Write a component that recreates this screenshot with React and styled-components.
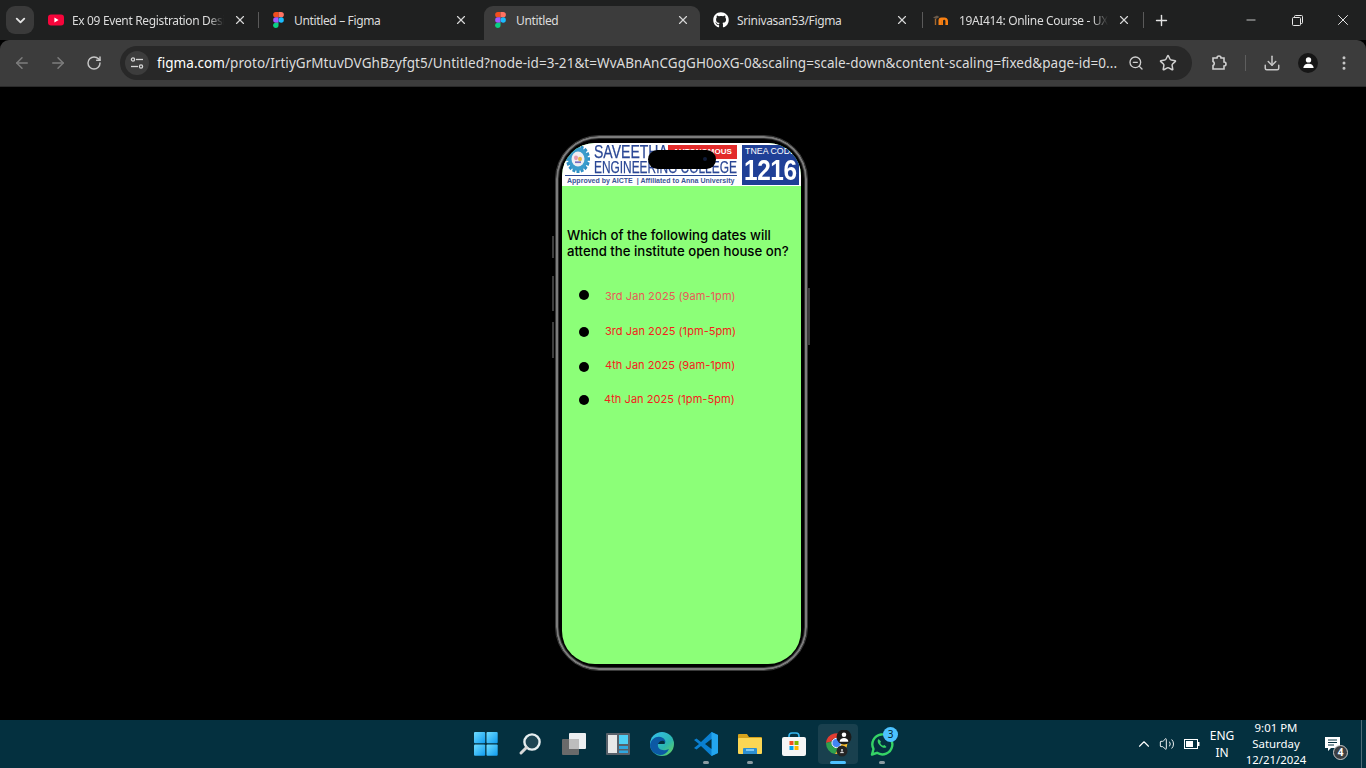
import React from 'react';
import styled, { createGlobalStyle } from 'styled-components';
import {
  ArrowLeft, ArrowRight, RotateCw, ZoomOut, Star, Download, MoreVertical,
  X, Plus, Minus, ChevronDown, ChevronUp, Volume2,
} from 'lucide-react';
import { FaGithub } from 'react-icons/fa';

const GlobalStyle = createGlobalStyle`
  html, body {
    margin: 0;
    padding: 0;
    background: #000;
    font-family: "Noto Sans", "Open Sans", sans-serif;
    overflow: hidden;
  }
  * { box-sizing: border-box; }
`;

const Page = styled.div`
  width: 1366px;
  height: 768px;
  display: flex;
  flex-direction: column;
`;

/* browser tab strip */
const TabStrip = styled.div`
  height: 40px;
  background: #1f2020;
  display: flex;
  padding: 6px 0 0 6px;
  color: #e3e3e3;
`;

const TabSearch = styled.div`
  width: 28px;
  height: 28px;
  border-radius: 9px;
  background: #3a3a3a;
  display: flex;
  align-items: center;
  justify-content: center;
  margin-right: 4px;
`;

const Tab = styled.div`
  width: ${p => p.$width}px;
  height: 34px;
  display: flex;
  align-items: center;
  padding: 0 ${p => p.$padRight}px 6px ${p => p.$padLeft}px;
  background: ${p => (p.$active ? '#3c3c3c' : 'transparent')};
  border-radius: ${p => (p.$active ? '9px 9px 0 0' : '0')};
  font-size: 12px;
  letter-spacing: -0.35px;
`;

const TabIcon = styled.div`
  width: 16px;
  height: 16px;
  flex: none;
  margin-right: ${p => p.$gap}px;
  display: flex;
  align-items: center;
  justify-content: center;
`;

const TabTitle = styled.div`
  flex: 1;
  min-width: 0;
  margin-right: 9px;
  white-space: nowrap;
  overflow: hidden;
  color: #dcdcdc;
  mask-image: ${p => (p.$fade ? 'linear-gradient(90deg, #000 90%, transparent 100%)' : 'none')};
`;

const TabClose = styled(X)`
  flex: none;
  color: #d6d6d6;
`;

const TabDivider = styled.div`
  width: 1px;
  height: 16px;
  margin-top: 6px;
  background: #5a5a5a;
  flex: none;
`;

const NewTab = styled.div`
  width: 34px;
  height: 28px;
  display: flex;
  align-items: center;
  justify-content: center;
`;

const WindowControls = styled.div`
  margin-left: auto;
  margin-top: -6px;
  display: flex;
`;

const WindowButton = styled.div`
  width: 46px;
  height: 40px;
  display: flex;
  align-items: center;
  justify-content: center;
  color: #e8e8e8;
`;

/* browser toolbar */
const Toolbar = styled.div`
  height: 47px;
  background: #3c3c3c;
  border-radius: 9px 9px 0 0;
  border-bottom: 1px solid #2a2a2a;
  display: flex;
  align-items: center;
  padding: 0 0 1px 4px;
  color: #c7c7c7;
`;

const NavButton = styled.div`
  width: 36px;
  height: 32px;
  display: flex;
  align-items: center;
  justify-content: center;
  color: ${p => (p.$dim ? '#7d7d7d' : '#c7c7c7')};
`;

const Omnibox = styled.div`
  width: 1072px;
  height: 34px;
  margin-left: 8px;
  background: #282828;
  border-radius: 17px;
  display: flex;
  align-items: center;
  padding: 0 14px 0 5px;
`;

const SiteChip = styled.div`
  width: 24px;
  height: 24px;
  border-radius: 50%;
  background: #3c3c3c;
  display: flex;
  align-items: center;
  justify-content: center;
  margin-right: 8px;
  flex: none;
`;

const UrlText = styled.div`
  width: 958px;
  font-size: 13.5px;
  color: #dcdcdc;
  white-space: nowrap;
  letter-spacing: 0.05px;
  span { color: #fff; }
`;

const OmniActions = styled.div`
  display: flex;
  align-items: center;
  margin-left: 13px;
  gap: 15px;
  color: #d0d0d0;
`;

const ToolActions = styled.div`
  display: flex;
  align-items: center;
  margin-left: 8px;
`;

const ToolSlot = styled.div`
  width: 36px;
  display: flex;
  align-items: center;
  justify-content: center;
`;

const ToolDivider = styled.div`
  width: 1px;
  height: 16px;
  background: #5e5e5e;
  margin: 0 8px 0 9px;
`;

const Avatar = styled.div`
  width: 20px;
  height: 20px;
  border-radius: 50%;
  background: #161616;
  display: flex;
  align-items: center;
  justify-content: center;
`;

/* black figma prototype stage */
const Stage = styled.main`
  flex: 1;
  background: #000;
  display: flex;
  justify-content: center;
  align-items: flex-start;
  padding: 48px 3px 0 0;
`;

const Phone = styled.div`
  position: relative;
  width: 253px;
  height: 536px;
  border-radius: 44px;
  background: #000;
  border: 1px solid #3a3a3a;
  box-shadow: inset 0 0 0 2px #7c7c7c, inset 0 0 0 3px #2c2c2c;
  padding: 7px 6px 6px;
`;

const SideButton = styled.div`
  position: absolute;
  top: ${p => p.$top}px;
  ${p => p.$side}: ${p => (p.$side === 'left' ? -4 : -3)}px;
  width: 2px;
  height: ${p => p.$height}px;
  background: #3d3d3d;
`;

const Screen = styled.div`
  height: 100%;
  border-radius: 33px;
  background: #8cff78;
  overflow: hidden;
  display: flex;
  flex-direction: column;
`;

const Notch = styled.div`
  position: absolute;
  top: 14px;
  left: 92px;
  width: 68px;
  height: 19px;
  border-radius: 10px;
  background: #000;
`;

const Lens = styled.div`
  position: absolute;
  top: 7px;
  right: 9px;
  width: 4px;
  height: 4px;
  border-radius: 50%;
  background: #101c3a;
`;

const Banner = styled.div`
  height: 43px;
  flex: none;
  background: #fff;
  display: flex;
  padding: 2px 2px 1px 3px;
  filter: blur(0.4px);
`;

const BannerLeft = styled.div`
  width: 172px;
  display: flex;
  flex-direction: column;
`;

const BannerTop = styled.div`
  display: flex;
  height: 30px;
`;

const Seal = styled.div`
  width: 24px;
  height: 28px;
  flex: none;
  margin-left: 1px;
`;

const BannerNames = styled.div`
  flex: 1;
  min-width: 0;
  padding-left: 4px;
  color: #2a4795;
  font-family: "Liberation Sans", sans-serif;
  -webkit-text-stroke: 0.25px #2a4795;
`;

const NameLine = styled.div`
  position: relative;
  height: 15px;
  white-space: nowrap;
  line-height: 15px;
  font-size: ${p => p.$size}px;
`;

const NameText = styled.span`
  display: inline-block;
  transform: scaleX(${p => p.$squeeze});
  transform-origin: 0 50%;
`;

const AutonomousTag = styled.span`
  position: absolute;
  top: 0;
  right: 0;
  width: 69px;
  height: 14px;
  background: #e32b2b;
  color: #fff;
  font: bold 8px/14px "Liberation Sans", sans-serif;
  -webkit-text-stroke: 0;
  text-align: center;
`;

const Affiliation = styled.div`
  border-top: 1px solid #2a4795;
  font: bold 7px/9px "Liberation Sans", sans-serif;
  color: #3a5496;
  white-space: nowrap;
  padding-left: 2px;
  letter-spacing: 0.02px;
`;

const CodeBlock = styled.div`
  width: 57px;
  margin-left: 5px;
  background: #1f3f96;
  color: #fff;
  display: flex;
  flex-direction: column;
  align-items: center;
  font-family: "Liberation Sans", sans-serif;
`;

const CodeLabel = styled.div`
  font-size: 8.8px;
  line-height: 11px;
  padding-top: 1px;
  white-space: nowrap;
`;

const CodeNumber = styled.div`
  font-size: 29px;
  font-weight: bold;
  line-height: 27px;
  letter-spacing: -0.5px;
  transform: scaleX(0.84);
`;

const Question = styled.p`
  margin: 41px 0 0 5px;
  font: 500 13.2px/16px Inter, sans-serif;
  color: #000;
`;

const Options = styled.ul`
  list-style: none;
  margin: 0;
  padding: 0 0 0 17px;
`;

const Option = styled.li`
  display: flex;
  align-items: flex-start;
  height: 14px;
  margin-top: ${p => p.$top}px;
`;

const Dot = styled.span`
  width: 10px;
  height: 10px;
  border-radius: 50%;
  background: #000;
  flex: none;
  margin-top: ${p => p.$drop}px;
`;

const OptionLabel = styled.span`
  margin-left: ${p => p.$indent}px;
  font: 400 11px/14px Inter, sans-serif;
  letter-spacing: 0.06px;
  color: ${p => (p.$soft ? '#e85a58' : '#f5201c')};
  white-space: nowrap;
`;

/* windows taskbar */
const Taskbar = styled.footer`
  height: 48px;
  background: #04303f;
  display: grid;
  grid-template-columns: 464px 440px 1fr;
  color: #fff;
`;

const TaskIcons = styled.div`
  display: flex;
`;

const TaskItem = styled.div`
  position: relative;
  width: 44px;
  height: 48px;
  display: flex;
  align-items: center;
  justify-content: center;
  &::before {
    content: '';
    display: ${p => (p.$active ? 'block' : 'none')};
    position: absolute;
    inset: 4px 2px;
    border-radius: 4px;
    background: #19404e;
  }
  & > * { position: relative; }
`;

const RunningMark = styled.span`
  position: absolute !important;
  bottom: 4px;
  left: 50%;
  transform: translateX(-50%);
  height: 3px;
  border-radius: 2px;
  width: ${p => (p.$active ? 16 : 6)}px;
  background: ${p => (p.$active ? '#4cc2ff' : '#8a9ba2')};
`;

const Tray = styled.div`
  display: flex;
  align-items: center;
  padding-left: 230px;
  font-size: 12px;
`;

const TrayIcon = styled.div`
  width: ${p => p.$width}px;
  display: flex;
  justify-content: center;
  align-items: center;
`;

const TrayText = styled.div`
  width: ${p => p.$width}px;
  text-align: center;
  font-size: ${p => p.$size || 12}px;
  line-height: ${p => p.$line}px;
  white-space: nowrap;
  margin-top: ${p => p.$top || 0}px;
`;

const NotifyWrap = styled.div`
  position: relative;
  width: 30px;
  margin-left: 6px;
  display: flex;
  justify-content: center;
`;

const NotifyBadge = styled.span`
  position: absolute;
  right: 0;
  top: 9px;
  width: 15px;
  height: 15px;
  border-radius: 50%;
  background: #3b3f42;
  border: 1px solid #c9c9c9;
  font: bold 10px/13px "Noto Sans", sans-serif;
  text-align: center;
`;

const CountBadge = styled.span`
  position: absolute !important;
  top: 7px;
  right: 6px;
  width: 15px;
  height: 15px;
  border-radius: 50%;
  background: #4cc2ff;
  color: #06222c;
  font: 10px/15px "Noto Sans", sans-serif;
  text-align: center;
`;

const ShowDesktop = styled.div`
  width: 1px;
  height: 48px;
  margin-left: auto;
  margin-right: 4px;
  background: #4e6c77;
`;

function FigmaIcon() {
  return (
    <svg width="11" height="16" viewBox="0 0 12 18">
      <path d="M0 3a3 3 0 0 1 3-3h3v6H3a3 3 0 0 1-3-3z" fill="#f24e1e" />
      <path d="M6 0h3a3 3 0 0 1 0 6H6z" fill="#ff7262" />
      <path d="M0 9a3 3 0 0 1 3-3h3v6H3a3 3 0 0 1-3-3z" fill="#a259ff" />
      <circle cx="9" cy="9" r="3" fill="#1abcfe" />
      <path d="M0 15a3 3 0 0 1 3-3h3v3a3 3 0 0 1-6 0z" fill="#0acf83" />
    </svg>
  );
}

function YoutubeIcon() {
  return (
    <svg width="16" height="12" viewBox="0 0 16 12">
      <rect width="16" height="11" y="0.5" rx="3" fill="#f7053b" />
      <path d="M6.4 3.6 10.6 6l-4.2 2.4z" fill="#fff" />
    </svg>
  );
}

function MoodleIcon() {
  return (
    <svg width="16" height="12" viewBox="0 0 16 12">
      <path d="M0 3.500 4 1.500 6.500 3 3 5z" fill="#6b5a4a" />
      <path d="M1.800 5h1.400v6H1.800z" fill="#a8692c" />
      <path d="M5.500 11V6.500a3 3 0 0 1 3-3h2.500a3.500 3.500 0 0 1 4 3.500v4h-2.600V7a1.200 1.200 0 0 0-2.400 0v4H8.100V7a.8.800 0 0 0-.1-.5V11z" fill="#f98012" />
    </svg>
  );
}

function TuneIcon() {
  return (
    <svg width="14" height="14" viewBox="0 0 14 14" fill="none" stroke="#d6d6d6" strokeWidth="1.3">
      <circle cx="3" cy="3.5" r="1.6" />
      <path d="M6 3.5h7" />
      <circle cx="11" cy="10.5" r="1.6" />
      <path d="M1 10.5h7" />
    </svg>
  );
}

function PuzzleIcon() {
  return (
    <svg width="18" height="18" viewBox="0 0 18 18" fill="none" stroke="#d0d0d0" strokeWidth="1.6">
      <path d="M4 4h4a2 2 0 0 1 4 0h3v4a2 2 0 0 1 0 4v3H4v-3.5a2.2 2.2 0 0 0 0-4z" />
    </svg>
  );
}

function RestoreIcon() {
  return (
    <svg width="11" height="11" viewBox="0 0 11 11" fill="none" stroke="#e8e8e8">
      <rect x="0.5" y="2.5" width="8" height="8" rx="1" />
      <path d="M2.5 2.5V1.5a1 1 0 0 1 1-1h6a1 1 0 0 1 1 1v6a1 1 0 0 1-1 1H8.5" />
    </svg>
  );
}

function UserGlyph({ size = 14, fill = '#fff' }) {
  return (
    <svg width={size} height={size} viewBox="0 0 14 14" fill={fill}>
      <circle cx="7" cy="4.2" r="2.9" />
      <path d="M1.5 13c0-3 2.6-4.6 5.5-4.6s5.500 1.600 5.500 4.600z" />
    </svg>
  );
}

function CollegeSeal() {
  const teeth = Array.from({ length: 16 }, (_, i) => i * 22.5);
  return (
    <svg width="24" height="28" viewBox="0 0 24 24" preserveAspectRatio="none">
      {teeth.map(a => (
        <rect key={a} x="10.5" y="0" width="3" height="4" fill="#2f8fc4" transform={`rotate(${a} 12 12)`} />
      ))}
      <circle cx="12" cy="12" r="10" fill="#3a9ccc" />
      <circle cx="12" cy="12" r="6.5" fill="#f0eef2" />
      <circle cx="10" cy="11" r="2" fill="#e69ab0" />
      <circle cx="14" cy="12" r="2" fill="#e9b84a" />
      <rect x="9" y="14" width="6" height="1.5" fill="#7a6fc0" />
    </svg>
  );
}

function WindowsLogo() {
  const tiles = [[0, 0], [12.5, 0], [0, 12.5], [12.5, 12.5]];
  return (
    <svg width="24" height="24" viewBox="0 0 24 24">
      <defs>
        <linearGradient id="winTile" x1="0" y1="0" x2="1" y2="1">
          <stop offset="0" stopColor="#6fdcff" />
          <stop offset="1" stopColor="#0f9bf0" />
        </linearGradient>
      </defs>
      {tiles.map(([x, y]) => (
        <rect key={`${x}-${y}`} x={x} y={y} width="11.2" height="11.2" rx="1" fill="url(#winTile)" />
      ))}
    </svg>
  );
}

function SearchGlyph() {
  return (
    <svg width="24" height="24" viewBox="0 0 24 24" fill="none">
      <circle cx="14" cy="10" r="7.6" fill="#1d4452" stroke="#e6eef0" strokeWidth="2.4" />
      <path d="M8.500 15.500 3 21" stroke="#d8d8d8" strokeWidth="3" strokeLinecap="round" />
    </svg>
  );
}

function TaskViewIcon() {
  return (
    <svg width="24" height="24" viewBox="0 0 24 24">
      <rect x="7" y="1" width="17" height="16" rx="1" fill="#eceff1" />
      <rect x="0" y="7" width="17" height="16" rx="1" fill="#6a6a6a" />
      <rect x="7" y="7" width="10" height="10" fill="#bdbdbd" />
    </svg>
  );
}

function WidgetsIcon() {
  return (
    <svg width="24" height="24" viewBox="0 0 24 24">
      <rect width="24" height="22" y="1" rx="1" fill="#59616a" />
      <rect x="2" y="3" width="9" height="18" fill="#e8e8e8" />
      <rect x="13" y="3" width="9" height="9" fill="#4fd0f5" />
      <rect x="13" y="14" width="9" height="3" fill="#2fa7e0" />
      <rect x="13" y="18.500" width="9" height="2.500" fill="#2fa7e0" />
    </svg>
  );
}

function EdgeIcon() {
  return (
    <svg width="24" height="24" viewBox="0 0 24 24">
      <defs>
        <linearGradient id="edgeOuter" x1="0" y1="0" x2="1" y2="1">
          <stop offset="0" stopColor="#35c1f1" />
          <stop offset="0.6" stopColor="#2bb6b0" />
          <stop offset="1" stopColor="#6ed64f" />
        </linearGradient>
      </defs>
      <circle cx="12" cy="12" r="12" fill="url(#edgeOuter)" />
      <path d="M0 13C1 6 8 3 13 6c3 2 3 5 1 6H8c-1 4 3 7 8 6 1 0 2-1 3-1-2 4-5 6-9 6-6-1-10-5-10-10z" fill="#0c59a4" />
      <path d="M8 12c1-3 4-4 6-3 1 1 1 3 0 3z" fill="#04303f" />
    </svg>
  );
}

function VsCodeIcon() {
  return (
    <svg width="24" height="24" viewBox="0 0 24 24">
      <path d="M17.500 0 24 3v18l-6.500 3L7 14l-4.500 3.500L0 16l5-4-5-4 2.500-1.500L7 10z" fill="#0a7fd0" />
      <path d="M17.500 0 24 3v18l-6.500 3z" fill="#23a5ee" />
      <path d="M17.500 7v10l-6.500-5z" fill="#04303f" />
    </svg>
  );
}

function FolderIcon() {
  return (
    <svg width="24" height="24" viewBox="0 0 24 24">
      <path d="M0 3a1 1 0 0 1 1-1h8l2 3h12a1 1 0 0 1 1 1v3H0z" fill="#d6a21c" />
      <rect y="6" width="24" height="16" rx="1" fill="#fbd654" />
      <path d="M5 22v-5a1 1 0 0 1 1-1h12a1 1 0 0 1 1 1v5z" fill="#2d8fd0" />
      <rect x="8" y="17" width="8" height="2" fill="#7cc8f2" />
    </svg>
  );
}

function StoreIcon() {
  return (
    <svg width="24" height="24" viewBox="0 0 24 24">
      <path d="M7 6V4a3 3 0 0 1 3-3h4a3 3 0 0 1 3 3v2" fill="none" stroke="#35b5ee" strokeWidth="1.600" />
      <rect y="5" width="24" height="19" rx="2" fill="#f6f6f6" />
      <rect x="7.500" y="9" width="4" height="4" fill="#f25022" />
      <rect x="12.500" y="9" width="4" height="4" fill="#7fba00" />
      <rect x="7.500" y="14" width="4" height="4" fill="#00a4ef" />
      <rect x="12.500" y="14" width="4" height="4" fill="#ffb900" />
    </svg>
  );
}

function ChromeIcon() {
  return (
    <svg width="28" height="28" viewBox="0 0 28 28">
      <path d="M2 13a11 11 0 0 1 20-5H12.500a5 5 0 0 0-5 3.500z" fill="#e23d32" />
      <path d="M2 13a11 11 0 0 0 9 11l4-7a5 5 0 0 1-7.500-5.500z" fill="#2fa04d" />
      <path d="M22 8a11 11 0 0 1-11 16l4.500-7.500A5 5 0 0 0 16 10z" fill="#fbc02d" />
      <circle cx="12.500" cy="13" r="4.600" fill="#4285f4" stroke="#fff" strokeWidth="1" />
      <circle cx="20" cy="7" r="7.500" fill="#1b1b1b" />
      <g transform="translate(14.500 1.500)"><UserGlyph size={11} /></g>
      <circle cx="18" cy="21" r="5.500" fill="#242424" />
      <g transform="translate(15.500 18.500)"><UserGlyph size={5} fill="#d8d8d8" /></g>
    </svg>
  );
}

function WhatsappIcon() {
  return (
    <svg width="24" height="24" viewBox="0 0 24 24" fill="none">
      <path d="M2 22.500 3.500 17A10 10 0 1 1 7 20.800z" stroke="#35d366" strokeWidth="2.400" strokeLinejoin="round" fill="#04303f" />
      <path d="M8.500 7c-1.500 1.500-1 4 1.500 6.500s5 3 6.500 1.500l-2-2-1.500.8c-1.200-.5-2.300-1.600-2.800-2.800l.8-1.500z" fill="#35d366" />
    </svg>
  );
}

function BatteryIcon() {
  return (
    <svg width="16" height="10" viewBox="0 0 16 10" fill="none">
      <rect x="0.500" y="0.500" width="13" height="9" stroke="#fff" />
      <rect x="2" y="2" width="7" height="6" fill="#fff" />
      <rect x="14" y="3" width="1.500" height="4" fill="#fff" />
    </svg>
  );
}

function NotifyIcon() {
  return (
    <svg width="16" height="16" viewBox="0 0 16 16">
      <path d="M0 1h15v11H6l-3 3v-3H0z" fill="#fff" />
      <path d="M3 4h9M3 6.500h9M3 9h6" stroke="#04303f" />
    </svg>
  );
}

const tabs = [
  { title: 'Ex 09 Event Registration Design', icon: <YoutubeIcon />, width: 220, left: 10, right: 11, gap: 8, fade: true },
  { title: 'Untitled – Figma', icon: <FigmaIcon />, width: 225, left: 11, right: 16, gap: 8 },
  { title: 'Untitled', icon: <FigmaIcon />, width: 216, left: 8, right: 10, gap: 8, active: true },
  { title: 'Srinivasan53/Figma', icon: <FaGithub size={16} color="#fff" />, width: 222, left: 13, right: 13, gap: 8 },
  { title: '19AI414: Online Course - UX Design', icon: <MoodleIcon />, width: 220, left: 10, right: 12, gap: 10, fade: true },
];

const options = [
  { label: '3rd Jan 2025 (9am-1pm)', top: 30, drop: 1, indent: 16, soft: true },
  { label: '3rd Jan 2025 (1pm-5pm)', top: 21, drop: 3, indent: 16 },
  { label: '4th Jan 2025 (9am-1pm)', top: 20, drop: 4, indent: 16 },
  { label: '4th Jan 2025 (1pm-5pm)', top: 20, drop: 3, indent: 15 },
];

const apps = [
  { name: 'start', icon: <WindowsLogo /> },
  { name: 'search', icon: <SearchGlyph /> },
  { name: 'taskview', icon: <TaskViewIcon /> },
  { name: 'widgets', icon: <WidgetsIcon /> },
  { name: 'edge', icon: <EdgeIcon /> },
  { name: 'vscode', icon: <VsCodeIcon />, running: true },
  { name: 'explorer', icon: <FolderIcon />, running: true },
  { name: 'store', icon: <StoreIcon /> },
  { name: 'chrome', icon: <ChromeIcon />, running: true, active: true },
  { name: 'whatsapp', icon: <WhatsappIcon />, running: true, count: 3 },
];

function App() {
  return (
    <Page>
      <GlobalStyle />
      <TabStrip>
        <TabSearch><ChevronDown size={15} strokeWidth={3} color="#e3e3e3" /></TabSearch>
        {tabs.map((tab, i) => (
          <React.Fragment key={tab.title}>
            <Tab $width={tab.width} $padLeft={tab.left} $padRight={tab.right} $active={tab.active}>
              <TabIcon $gap={tab.gap}>{tab.icon}</TabIcon>
              <TabTitle $fade={tab.fade}>{tab.title}</TabTitle>
              <TabClose size={14} strokeWidth={2} />
            </Tab>
            {(i === 0 || i === 3 || i === 4) && <TabDivider />}
          </React.Fragment>
        ))}
        <NewTab><Plus size={17} strokeWidth={2} color="#e3e3e3" /></NewTab>
        <WindowControls>
          <WindowButton><Minus size={14} strokeWidth={1.4} /></WindowButton>
          <WindowButton><RestoreIcon /></WindowButton>
          <WindowButton><X size={18} strokeWidth={1.3} /></WindowButton>
        </WindowControls>
      </TabStrip>

      <Toolbar>
        <NavButton $dim><ArrowLeft size={18} /></NavButton>
        <NavButton $dim><ArrowRight size={18} /></NavButton>
        <NavButton><RotateCw size={16} strokeWidth={2.2} /></NavButton>
        <Omnibox>
          <SiteChip><TuneIcon /></SiteChip>
          <UrlText>
            <span>figma.com</span>/proto/IrtiyGrMtuvDVGhBzyfgt5/Untitled?node-id=3-21&amp;t=WvABnAnCGgGH0oXG-0&amp;scaling=scale-down&amp;content-scaling=fixed&amp;page-id=0...
          </UrlText>
          <OmniActions>
            <ZoomOut size={16} />
            <Star size={18} />
          </OmniActions>
        </Omnibox>
        <ToolActions>
          <ToolSlot><PuzzleIcon /></ToolSlot>
          <ToolDivider />
          <ToolSlot><Download size={18} /></ToolSlot>
          <ToolSlot><Avatar><UserGlyph size={13} /></Avatar></ToolSlot>
          <ToolSlot><MoreVertical size={18} /></ToolSlot>
        </ToolActions>
      </Toolbar>

      <Stage>
        <Phone>
          <SideButton $side="left" $top={100} $height={22} />
          <SideButton $side="left" $top={140} $height={35} />
          <SideButton $side="left" $top={186} $height={36} />
          <SideButton $side="right" $top={152} $height={57} />
          <Screen>
            <Banner>
              <BannerLeft>
                <BannerTop>
                  <Seal><CollegeSeal /></Seal>
                  <BannerNames>
                    <NameLine $size={18}>
                      <NameText $squeeze={0.78}>SAVEETHA</NameText>
                      <AutonomousTag>AUTONOMOUS</AutonomousTag>
                    </NameLine>
                    <NameLine $size={17}>
                      <NameText $squeeze={0.7}>ENGINEERING COLLEGE</NameText>
                    </NameLine>
                  </BannerNames>
                </BannerTop>
                <Affiliation>Approved by AICTE &nbsp;| Affiliated to Anna University</Affiliation>
              </BannerLeft>
              <CodeBlock>
                <CodeLabel>TNEA CODE</CodeLabel>
                <CodeNumber>1216</CodeNumber>
              </CodeBlock>
            </Banner>
            <Question>Which of the following dates will attend the institute open house on?</Question>
            <Options>
              {options.map(o => (
                <Option key={o.label} $top={o.top}>
                  <Dot $drop={o.drop} />
                  <OptionLabel $indent={o.indent} $soft={o.soft}>{o.label}</OptionLabel>
                </Option>
              ))}
            </Options>
          </Screen>
          <Notch><Lens /></Notch>
        </Phone>
      </Stage>

      <Taskbar>
        <div />
        <TaskIcons>
          {apps.map(app => (
            <TaskItem key={app.name} $active={app.active}>
              {app.icon}
              {app.count && <CountBadge>{app.count}</CountBadge>}
              {app.running && <RunningMark $active={app.active} />}
            </TaskItem>
          ))}
        </TaskIcons>
        <Tray>
          <TrayIcon $width={20}><ChevronUp size={18} strokeWidth={1.5} /></TrayIcon>
          <TrayIcon $width={26}><Volume2 size={16} strokeWidth={1.4} /></TrayIcon>
          <TrayIcon $width={24}><BatteryIcon /></TrayIcon>
          <TrayText $width={36} $line={17}>ENG<br />IN</TrayText>
          <TrayText $width={72} $line={16} $top={-1} $size={11.4}>9:01 PM<br />Saturday<br />12/21/2024</TrayText>
          <NotifyWrap>
            <NotifyIcon />
            <NotifyBadge>4</NotifyBadge>
          </NotifyWrap>
          <ShowDesktop />
        </Tray>
      </Taskbar>
    </Page>
  );
}

export default App;
